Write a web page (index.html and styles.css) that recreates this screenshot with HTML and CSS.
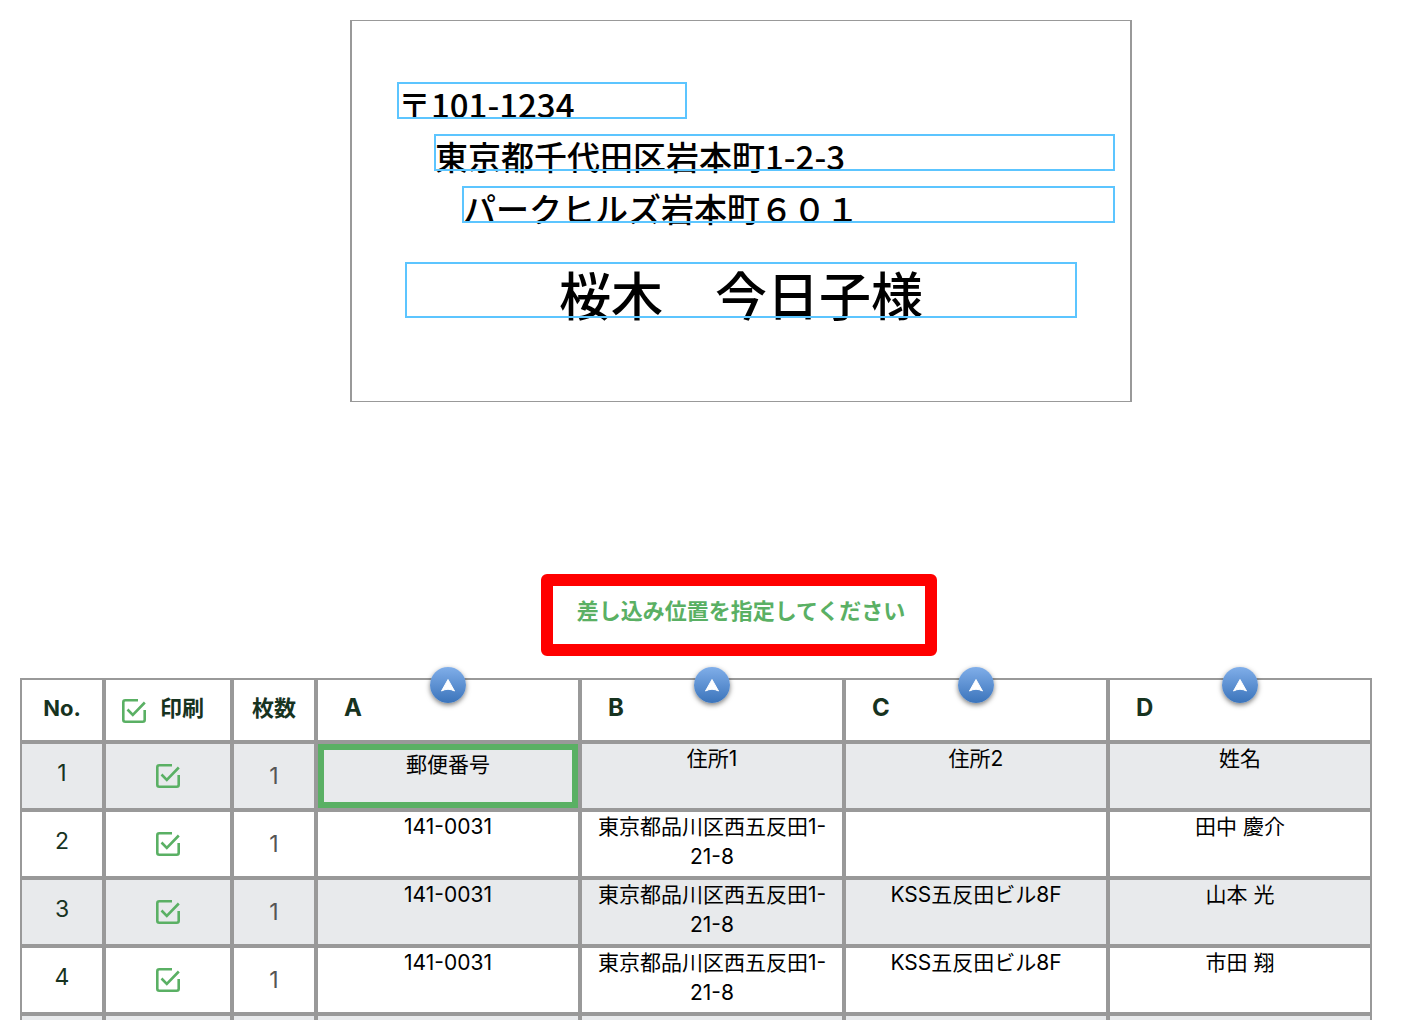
FILE: index.html
```html
<!DOCTYPE html>
<html lang="ja">
<head>
  <meta charset="UTF-8">
  <title>差し込み印刷</title>
  <link rel="stylesheet" href="styles.css">
</head>
<body>

  <div class="preview">
    <div class="card">
      <div class="field zip">〒101-1234</div>
      <div class="field address1">東京都千代田区岩本町1-2-3</div>
      <div class="field address2">パークヒルズ岩本町６０１</div>
      <div class="field name">桜木　今日子様</div>
    </div>
    <p class="message">差し込み位置を指定してください</p>
  </div>

  <table class="list">
    <colgroup>
      <col class="col-no">
      <col class="col-print">
      <col class="col-count">
      <col><col><col><col>
    </colgroup>
    <thead>
      <tr>
        <th>No.</th>
        <th><label class="print-all"><input type="checkbox" class="check" checked>印刷</label></th>
        <th>枚数</th>
        <th class="column">A<button class="insert" aria-label="A列を差し込む"><svg viewBox="0 0 36 36"><path d="M18 12.5 L24.5 24 Q18 20.5 11.5 24 Z"/></svg></button></th>
        <th class="column">B<button class="insert" aria-label="B列を差し込む"><svg viewBox="0 0 36 36"><path d="M18 12.5 L24.5 24 Q18 20.5 11.5 24 Z"/></svg></button></th>
        <th class="column">C<button class="insert" aria-label="C列を差し込む"><svg viewBox="0 0 36 36"><path d="M18 12.5 L24.5 24 Q18 20.5 11.5 24 Z"/></svg></button></th>
        <th class="column">D<button class="insert" aria-label="D列を差し込む"><svg viewBox="0 0 36 36"><path d="M18 12.5 L24.5 24 Q18 20.5 11.5 24 Z"/></svg></button></th>
      </tr>
    </thead>
    <tbody>
      <tr>
        <td class="no">1</td>
        <td class="print"><input type="checkbox" class="check" aria-label="1を印刷" checked></td>
        <td class="count"><input type="text" value="1" aria-label="1の枚数"></td>
        <td class="selected"><div class="selected-box">郵便番号</div></td>
        <td>住所1</td>
        <td>住所2</td>
        <td>姓名</td>
      </tr>
      <tr>
        <td class="no">2</td>
        <td class="print"><input type="checkbox" class="check" aria-label="2を印刷" checked></td>
        <td class="count"><input type="text" value="1" aria-label="2の枚数"></td>
        <td>141-0031</td>
        <td>東京都品川区西五反田1-<wbr>21-8</td>
        <td></td>
        <td>田中 慶介</td>
      </tr>
      <tr>
        <td class="no">3</td>
        <td class="print"><input type="checkbox" class="check" aria-label="3を印刷" checked></td>
        <td class="count"><input type="text" value="1" aria-label="3の枚数"></td>
        <td>141-0031</td>
        <td>東京都品川区西五反田1-<wbr>21-8</td>
        <td>KSS五反田ビル8F</td>
        <td>山本 光</td>
      </tr>
      <tr>
        <td class="no">4</td>
        <td class="print"><input type="checkbox" class="check" aria-label="4を印刷" checked></td>
        <td class="count"><input type="text" value="1" aria-label="4の枚数"></td>
        <td>141-0031</td>
        <td>東京都品川区西五反田1-<wbr>21-8</td>
        <td>KSS五反田ビル8F</td>
        <td>市田 翔</td>
      </tr>
      <tr>
        <td class="no"></td>
        <td class="print"></td>
        <td class="count"></td>
        <td></td>
        <td></td>
        <td></td>
        <td></td>
      </tr>
    </tbody>
  </table>

</body>
</html>
```

FILE: styles.css
```css
* {
  box-sizing: border-box;
}
body {
  margin: 0;
  padding: 20px 48px 0 20px;
  background-color: #fff;
  color: #000;
  font-family: Inter, "Noto Sans CJK JP", sans-serif;
}

/* はがきプレビュー */
.preview {
  display: flex;
  flex-direction: column;
  align-items: center;
  padding-left: 90px;
}
.card {
  display: flex;
  flex-direction: column;
  width: 100%;
  max-width: 782px;
  padding: 61px 15px 83px 45px;
  border: 1px solid #999;
  border-width: 1px 2px;
  font-family: "Noto Sans CJK JP", sans-serif;
  font-weight: 500;
}
.field {
  height: 37px;
  padding-left: 1px;
  margin-bottom: 15px;
  font-size: 33px;
  line-height: 44px;
  white-space: nowrap;
  outline: 2px solid #5cc5ff;
  outline-offset: -2px;
}
.zip {
  width: 290px;
}
.address1 {
  margin-left: 37px;
}
.address2 {
  margin-left: 65px;
}
.name {
  height: 56px;
  margin: 24px 38px 0 8px;
  padding: 0;
  font-size: 52px;
  line-height: 64px;
  text-align: center;
}

.message {
  margin: 172px 4px 22px 0;
  padding: 9px 20px 17px 24px;
  border: 12px solid #f00;
  border-radius: 6px;
  color: #5ab064;
  font-size: 22px;
  font-weight: bold;
  line-height: 32px;
}

/* 宛先リスト */
.list {
  width: 100%;
  table-layout: fixed;
  border-collapse: separate;
  border-spacing: 0;
  border: none;
}
.col-no, .col-count {
  width: 84px;
}
.col-print {
  width: 128px;
}
th, td {
  border: 2px solid #999;
}
th {
  position: relative;
  height: 64px;
  padding: 0 0 5px;
  color: #17331f;
  font-size: 22px;
  line-height: 30px;
}
.column {
  padding-left: 26px;
  font-size: 24px;
  text-align: left;
}
td {
  height: 68px;
  padding: 0 12px;
  font-size: 21px;
  line-height: 30px;
  text-align: center;
  vertical-align: top;
}
tbody tr:nth-child(odd) {
  background-color: #e8eaec;
}
.no, .print, .count {
  vertical-align: middle;
}
.no {
  padding-bottom: 6px;
  color: #17331f;
  font-size: 23px;
}
.count input {
  width: 100%;
  padding: 0;
  border: none;
  background: none;
  color: #555;
  font: inherit;
  font-size: 23px;
  text-align: center;
}
.selected {
  padding: 0;
}
.selected-box {
  height: 64px;
  border: 6px solid #5ab064;
}

.print-all {
  display: flex;
  align-items: flex-end;
  gap: 14px;
  padding-left: 16px;
}
.check {
  appearance: none;
  display: block;
  width: 24px;
  height: 24px;
  margin: 0;
}
.check:checked {
  background: url("data:image/svg+xml,%3Csvg xmlns='http://www.w3.org/2000/svg' viewBox='0 0 24 24' fill='none' stroke='%235ab064' stroke-width='2.6'%3E%3Cpath d='M16 1.3H3.3Q1.3 1.3 1.3 3.3V20.7Q1.3 22.7 3.3 22.7H20.7Q22.7 22.7 22.7 20.7V11'/%3E%3Cpath d='M5.5 10.5L10.8 15.8L22.8 3.5'/%3E%3C/svg%3E") no-repeat;
}
.print .check {
  margin: 0 auto;
}

.insert {
  position: absolute;
  top: -13px;
  left: calc(50% - 18px);
  width: 36px;
  height: 36px;
  padding: 0;
  border: none;
  border-radius: 50%;
  background: linear-gradient(#80aee9, #3b74bb);
  box-shadow: 0 2px 5px rgba(0, 0, 0, 0.5);
  cursor: pointer;
}
.insert svg {
  display: block;
  fill: #fff;
  stroke: #fff;
  stroke-linejoin: round;
}
```
